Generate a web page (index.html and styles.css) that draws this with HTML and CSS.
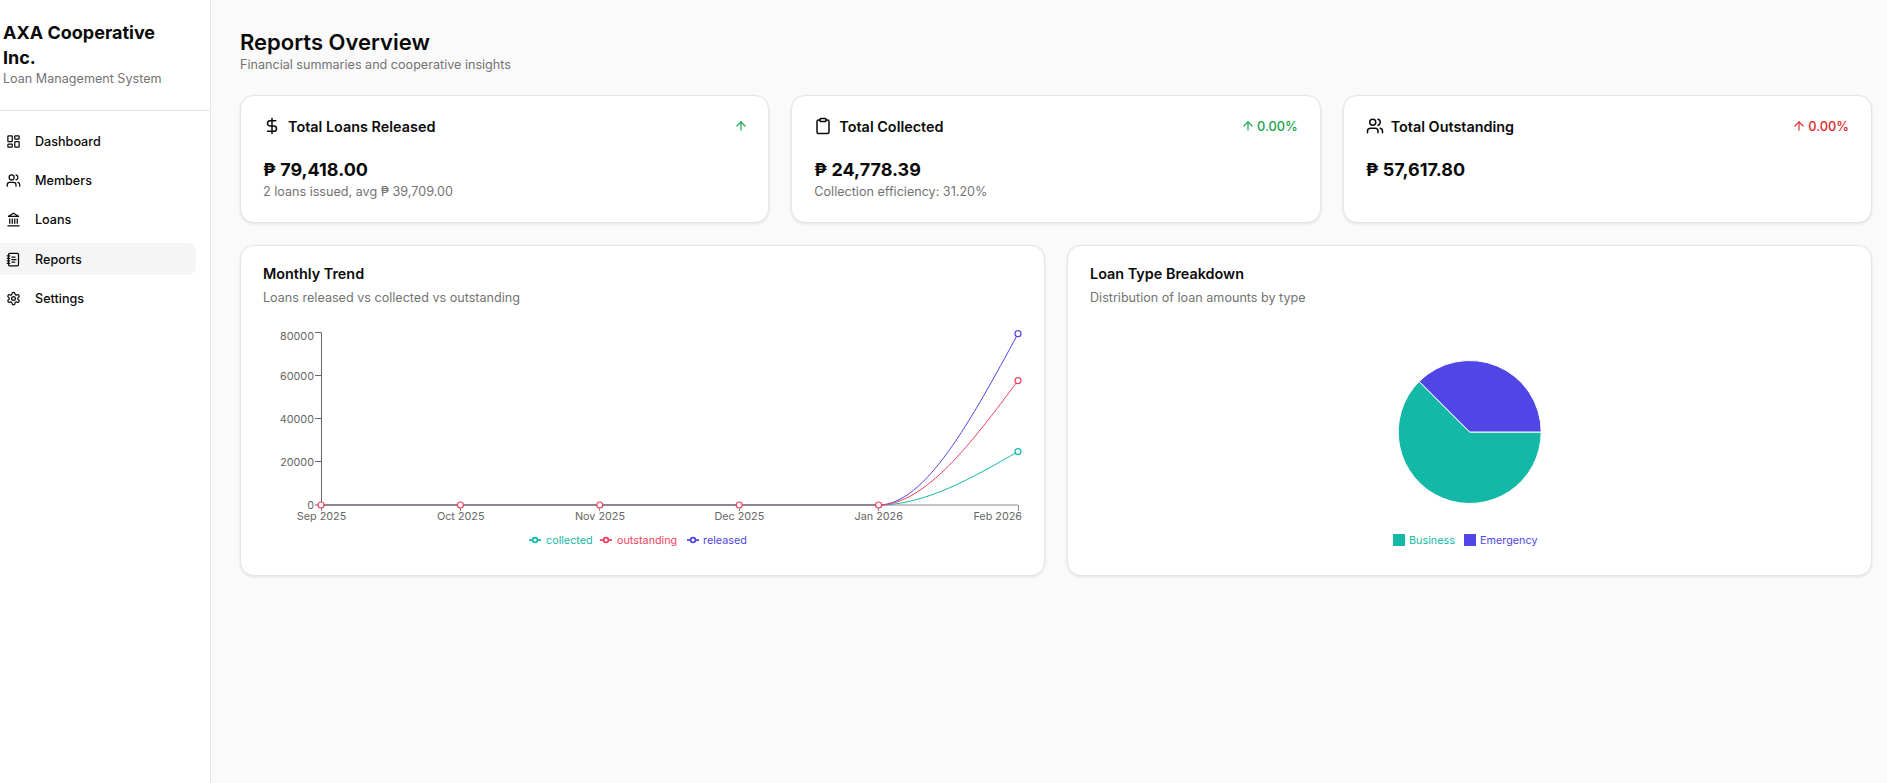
FILE: index.html
```html
<!DOCTYPE html>
<html lang="en">
<head>
<meta charset="utf-8">
<title>Reports Overview</title>
<link rel="stylesheet" href="styles.css">
</head>
<body>
<div class="app">
  <aside class="sidebar">
    <div class="brand">
      <h2 class="brand-name">AXA Cooperative Inc.</h2>
      <p class="brand-sub">Loan Management System</p>
    </div>
    <nav class="nav">
      <a class="nav-item"><svg class="icon" viewBox="0 0 24 24"><rect x="3" y="3" width="7" height="9" rx="1"/><rect x="14" y="3" width="7" height="5" rx="1"/><rect x="14" y="12" width="7" height="9" rx="1"/><rect x="3" y="16" width="7" height="5" rx="1"/></svg>Dashboard</a>
      <a class="nav-item"><svg class="icon" viewBox="0 0 24 24"><path d="M16 21v-2a4 4 0 0 0-4-4H6a4 4 0 0 0-4 4v2"/><circle cx="9" cy="7" r="4"/><path d="M22 21v-2a4 4 0 0 0-3-3.87"/><path d="M16 3.13a4 4 0 0 1 0 7.75"/></svg>Members</a>
      <a class="nav-item"><svg class="icon" viewBox="0 0 24 24"><path d="M3 22h18M6 18v-7M10 18v-7M14 18v-7M18 18v-7M12 2l8 5H4z"/></svg>Loans</a>
      <a class="nav-item active"><svg class="icon" viewBox="0 0 24 24"><path d="M2 6h4M2 10h4M2 14h4M2 18h4"/><rect x="4" y="2" width="16" height="20" rx="2"/><path d="M9.5 8h5M9.5 12H16M9.5 16H14"/></svg>Reports</a>
      <a class="nav-item"><svg class="icon" viewBox="0 0 24 24"><path d="M12.22 2h-.44a2 2 0 0 0-2 2v.18a2 2 0 0 1-1 1.73l-.43.25a2 2 0 0 1-2 0l-.15-.08a2 2 0 0 0-2.73.73l-.22.38a2 2 0 0 0 .73 2.73l.15.1a2 2 0 0 1 1 1.72v.51a2 2 0 0 1-1 1.74l-.15.09a2 2 0 0 0-.73 2.73l.22.38a2 2 0 0 0 2.73.73l.15-.08a2 2 0 0 1 2 0l.43.25a2 2 0 0 1 1 1.73V20a2 2 0 0 0 2 2h.44a2 2 0 0 0 2-2v-.18a2 2 0 0 1 1-1.73l.43-.25a2 2 0 0 1 2 0l.15.08a2 2 0 0 0 2.73-.73l.22-.39a2 2 0 0 0-.73-2.73l-.15-.08a2 2 0 0 1-1-1.74v-.5a2 2 0 0 1 1-1.74l.15-.09a2 2 0 0 0 .73-2.73l-.22-.38a2 2 0 0 0-2.73-.73l-.15.08a2 2 0 0 1-2 0l-.43-.25a2 2 0 0 1-1-1.73V4a2 2 0 0 0-2-2z"/><circle cx="12" cy="12" r="3"/></svg>Settings</a>
    </nav>
  </aside>

  <main class="main">
    <header class="page-head">
      <h1 class="page-title">Reports Overview</h1>
      <p class="page-sub">Financial summaries and cooperative insights</p>
    </header>

    <section class="stats">
      <article class="card stat">
        <div class="stat-head">
          <div class="stat-label"><svg class="icon icon-lg" viewBox="0 0 24 24"><path d="M12 2v20"/><path d="M17 5H9.5a3.5 3.5 0 0 0 0 7h5a3.5 3.5 0 0 1 0 7H6"/></svg>Total Loans Released</div>
          <div class="trend up solo"><svg class="icon icon-sm" viewBox="0 0 24 24"><path d="m5 12 7-7 7 7"/><path d="M12 19V5"/></svg></div>
        </div>
        <div class="stat-value">₱ 79,418.00</div>
        <div class="stat-note">2 loans issued, avg ₱ 39,709.00</div>
      </article>
      <article class="card stat">
        <div class="stat-head">
          <div class="stat-label"><svg class="icon icon-lg" viewBox="0 0 24 24"><rect x="8" y="2" width="8" height="4" rx="1"/><path d="M16 4h2a2 2 0 0 1 2 2v14a2 2 0 0 1-2 2H6a2 2 0 0 1-2-2V6a2 2 0 0 1 2-2h2"/></svg>Total Collected</div>
          <div class="trend up"><svg class="icon icon-sm" viewBox="0 0 24 24"><path d="m5 12 7-7 7 7"/><path d="M12 19V5"/></svg>0.00%</div>
        </div>
        <div class="stat-value">₱ 24,778.39</div>
        <div class="stat-note">Collection efficiency: 31.20%</div>
      </article>
      <article class="card stat">
        <div class="stat-head">
          <div class="stat-label"><svg class="icon icon-lg" viewBox="0 0 24 24"><path d="M16 21v-2a4 4 0 0 0-4-4H6a4 4 0 0 0-4 4v2"/><circle cx="9" cy="7" r="4"/><path d="M22 21v-2a4 4 0 0 0-3-3.87"/><path d="M16 3.13a4 4 0 0 1 0 7.75"/></svg>Total Outstanding</div>
          <div class="trend down"><svg class="icon icon-sm" viewBox="0 0 24 24"><path d="m5 12 7-7 7 7"/><path d="M12 19V5"/></svg>0.00%</div>
        </div>
        <div class="stat-value">₱ 57,617.80</div>
      </article>
    </section>

    <section class="charts">
      <article class="card chart-card">
        <h3 class="chart-title">Monthly Trend</h3>
        <p class="chart-sub">Loans released vs collected vs outstanding</p>
        <svg class="chart" viewBox="263 320 760 235">
          <g class="axis-x">
            <path d="M321 505H1018"/>
            <path d="M321.5 505v6M460.5 505v6M599.5 505v6M739.5 505v6M878.5 505v6M1018.5 505v6"/>
          </g>
          <g class="axis-y">
            <path d="M321.5 332.5V505"/>
            <path d="M315 332.5h6M315 375.5h6M315 418.5h6M315 461.5h6M315 505h6"/>
          </g>
          <g class="tick-text">
            <text x="314" y="340" text-anchor="end">80000</text>
            <text x="314" y="380" text-anchor="end">60000</text>
            <text x="314" y="423" text-anchor="end">40000</text>
            <text x="314" y="466" text-anchor="end">20000</text>
            <text x="314" y="509" text-anchor="end">0</text>
            <text x="321.5" y="520" text-anchor="middle">Sep 2025</text>
            <text x="460.7" y="520" text-anchor="middle">Oct 2025</text>
            <text x="600" y="520" text-anchor="middle">Nov 2025</text>
            <text x="739.3" y="520" text-anchor="middle">Dec 2025</text>
            <text x="878.7" y="520" text-anchor="middle">Jan 2026</text>
            <text x="1022" y="520" text-anchor="end">Feb 2026</text>
          </g>
          <path class="baseline" d="M321 505H878.6"/>
          <g class="series collected">
            <path d="M878.6 505C925.1 505 971.6 478.3 1018 451.6"/>
            <circle cx="1018" cy="451.6" r="3"/>
          </g>
          <g class="series released">
            <path d="M878.6 505C925.1 505 971.6 419.3 1018 333.7"/>
            <circle cx="1018" cy="333.7" r="3"/>
          </g>
          <g class="series outstanding">
            <path d="M878.6 505C925.1 505 971.6 442.8 1018 380.6"/>
            <circle cx="321" cy="505" r="3"/><circle cx="460.4" cy="505" r="3"/><circle cx="599.8" cy="505" r="3"/><circle cx="739.2" cy="505" r="3"/><circle cx="878.6" cy="505" r="3"/><circle cx="1018" cy="380.6" r="3"/>
          </g>
          <g class="legend-line collected">
            <path d="M529 540h4M537 540h4"/><circle cx="535" cy="540" r="2.4"/>
            <text x="546" y="544">collected</text>
          </g>
          <g class="legend-line outstanding">
            <path d="M600 540h4M608 540h4"/><circle cx="606" cy="540" r="2.4"/>
            <text x="617" y="544">outstanding</text>
          </g>
          <g class="legend-line released">
            <path d="M687 540h4M695 540h4"/><circle cx="693" cy="540" r="2.4"/>
            <text x="703" y="544">released</text>
          </g>
        </svg>
      </article>

      <article class="card chart-card">
        <h3 class="chart-title">Loan Type Breakdown</h3>
        <p class="chart-sub">Distribution of loan amounts by type</p>
        <svg class="chart" viewBox="1090 320 760 235">
          <g class="pie">
            <path class="teal" d="M1469.7 432L1541.2 432A71.5 71.5 0 1 1 1419.14 381.44Z"/>
            <path class="indigo" d="M1469.7 432L1419.14 381.44A71.5 71.5 0 0 1 1541.2 432Z"/>
          </g>
          <rect class="teal-box" x="1393" y="534" width="12" height="12"/>
          <text class="pie-label teal-text" x="1409" y="544">Business</text>
          <rect class="indigo-box" x="1464" y="534" width="12" height="12"/>
          <text class="pie-label indigo-text" x="1480" y="544">Emergency</text>
        </svg>
      </article>
    </section>
  </main>
</div>
</body>
</html>
```

FILE: styles.css
```css
* { box-sizing: border-box; }
html, body { margin: 0; height: 100%; }
body {
  font-family: Inter, "Liberation Sans", sans-serif;
  color: #0a0a0a;
  background: #fafafa;
}
.app { display: flex; min-height: 100vh; }

.sidebar {
  width: 211px;
  flex: none;
  background: #fff;
  border-right: 1px solid #e5e5e5;
}
.brand {
  height: 111px;
  padding: 20px 40px 0 3px;
  border-bottom: 1px solid #e5e5e5;
}
.brand-name { margin: 0; font-size: 18px; line-height: 25px; font-weight: 700; }
.brand-sub { margin: 0; font-size: 12.6px; line-height: 18px; color: #737373; }
.nav {
  display: flex;
  flex-direction: column;
  gap: 7.4px;
  padding: 14px 14px 0 0;
}
.nav-item {
  display: flex;
  align-items: center;
  gap: 14.5px;
  height: 32px;
  padding-left: 5.5px;
  border-radius: 0 8px 8px 0;
  font-size: 12.6px;
  font-weight: 500;
  color: #0a0a0a;
}
.nav-item.active { background: #f5f5f5; }

.icon {
  width: 15px;
  height: 15px;
  flex: none;
  fill: none;
  stroke: currentColor;
  stroke-width: 2;
  stroke-linecap: round;
  stroke-linejoin: round;
}
.icon-lg { width: 18px; height: 18px; }
.icon-sm { width: 14px; height: 14px; }

.main { flex: 1; min-width: 0; padding: 28px 15px 0 29px; }
.page-head { margin-bottom: 22px; }
.page-title { margin: 0; font-size: 22px; line-height: 29px; font-weight: 600; }
.page-sub { margin: 0; font-size: 12.6px; line-height: 16px; color: #737373; }

.card {
  background: #fff;
  border: 1px solid #e5e5e5;
  border-radius: 14px;
  box-shadow: 0 1px 3px rgba(0, 0, 0, .1);
}
.stats {
  display: grid;
  grid-template-columns: repeat(3, 1fr);
  gap: 22px;
  margin-bottom: 22px;
}
.stat { height: 128px; padding: 20px 22px; }
.stat-head { display: flex; justify-content: space-between; align-items: center; height: 20px; }
.stat-label { display: flex; align-items: center; gap: 7px; font-size: 14.4px; font-weight: 600; }
.trend { display: flex; align-items: center; gap: 2px; font-size: 12.8px; font-weight: 500; }
.trend.up { color: #16a34a; }
.trend.down { color: #dc2626; }
.trend.solo { margin-right: -2px; }
.stat-value { margin-top: 21px; font-size: 18px; line-height: 26px; font-weight: 700; }
.stat-note { margin-top: 1px; font-size: 12.6px; line-height: 16px; color: #737373; }

.charts {
  display: grid;
  grid-template-columns: 1fr 1fr;
  gap: 22px;
}
.chart-card { height: 331px; min-width: 0; padding: 18px 22px 0; }
.chart-title { margin: 0; font-size: 14.4px; line-height: 20px; font-weight: 600; }
.chart-sub { margin: 5px 0 0; font-size: 12.6px; line-height: 18px; color: #737373; }
.chart { display: block; width: 760px; height: 235px; margin-top: 13px; }

.tick-text text { font-size: 10.8px; fill: #666; }
.axis-x path { fill: none; stroke: #888; stroke-width: 1; }
.axis-y path { fill: none; stroke: #666; stroke-width: 1; }
.baseline { fill: none; stroke: #7a6c82; stroke-width: 1.5; }
.series path { fill: none; stroke-width: 1; }
.series circle { fill: #fff; stroke-width: 1.2; }
.legend-line path { fill: none; stroke-width: 1.75; }
.legend-line circle { fill: #fff; stroke-width: 1.75; }
.legend-line text { font-size: 10.8px; stroke: none; }

.collected path, .collected circle { stroke: #14b8a6; }
.collected text { fill: #14b8a6; }
.outstanding path, .outstanding circle { stroke: #f43f5e; }
.outstanding text { fill: #f43f5e; }
.released path, .released circle { stroke: #4f46e5; }
.released text { fill: #4f46e5; }

.pie path { stroke: #fff; stroke-width: 1; }
.pie .teal, .teal-box { fill: #14b8a6; }
.pie .indigo, .indigo-box { fill: #4f46e5; }
.pie-label { font-size: 10.8px; }
.teal-text { fill: #14b8a6; }
.indigo-text { fill: #4f46e5; }
```
